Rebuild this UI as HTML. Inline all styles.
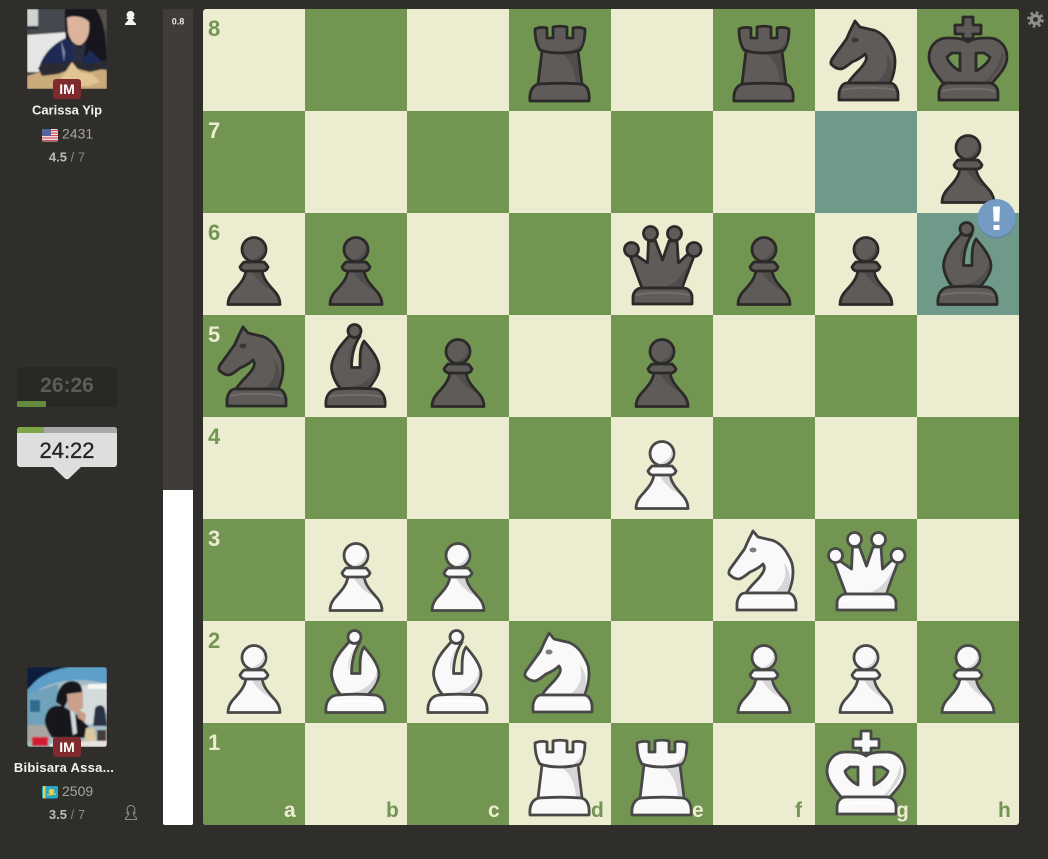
<!DOCTYPE html>
<html><head><meta charset="utf-8"><style>
html,body{margin:0;padding:0;background:#302e2b;width:1048px;height:859px;overflow:hidden}
svg{position:absolute;left:0;top:0;display:block}
.b{--f:#5e5b59;--s:#2b2a28;--d:#504e4c;--h:#716e6c}
.w{--f:#f9f9f9;--s:#484846;--d:#d6d6d8;--h:#ffffff}
.l{fill:#ebecd0}.k{fill:#739552}.hl{fill:#6f9988}
text{font-family:"Liberation Sans",sans-serif}
.co{font-size:22px;font-weight:700}
.fi{font-size:21px;font-weight:700}
.nm{font-size:13px;font-weight:700;fill:#f2f2f2;text-anchor:middle}
.im{font-size:14px;font-weight:700;fill:#fff;text-anchor:middle}
.rt{font-size:14px;fill:#a5a4a2}
.sc{font-size:13px;fill:#8b8a88;text-anchor:middle}
.sc tspan{font-weight:700;fill:#bdbcba}
.sk{stroke:var(--s);stroke-width:2.800;fill:var(--f)}
</style></head><body>
<svg width="1048" height="859" viewBox="0 0 1048 859" xmlns="http://www.w3.org/2000/svg">
<defs>
<g id="p" stroke-linejoin="round">
<path class="sk" d="M43 57C42 67 35 73 29 80C26 84 25 88 25 91.500H77C77 88 76 84 73 80C67 73 60 67 59 57Z"/>
<path d="M49 59H58C59 66 63 72 68 77C60 73 53 66 49 59Z" fill="var(--d)"/>
<path class="sk" d="M41 49H61C62 50 64 52 65 54C64 57 62 58 60 58H42C40 58 38 57 37 54C38 52 40 50 41 49Z"/>
<circle class="sk" cx="51" cy="36.500" r="12"/>
<path d="M60 32C62 39 56 45 47 47C54 48 62 44 62 36Z" fill="var(--d)"/>
</g>
<g id="r" stroke-linejoin="round">
<path class="sk" d="M33 42L29 75H73L69 42Z"/>
<path d="M52 44C62 50 66 62 67 74H71.500L67.500 44Z" fill="var(--d)"/>
<path class="sk" d="M26 20C30 18 34 18 38 19L38 29H44L44 18C48 17 54 17 58 18L58 29H64L64 19C68 18 72 18 76 20C76 28 75 35 71 41C60 45 42 45 31 41C27 35 26 28 26 20Z"/>
<path d="M62 42C67 40 72 35 74 29C74 34 73 37 70 40Z" fill="var(--d)"/>
<path class="sk" d="M21 92C20 82 24 76 30 75C44 74 60 74 72 75C78 76 81 82 80 92Z"/>
</g>
<g id="n" stroke-linejoin="round">
<path class="sk" d="M40 12L36 20C34 24 33 27 31.500 30L17 50C15.500 53 15.500 55 17 56C20 59 23 60 26 60C30 59 33 56 37 53C42 51 46 49 50 45C53 49 51 53 45 60C41 64 36 69 33 74H75C79 66 80 60 80 53C80 45 78 41 75 36C71 28 66 24 60 21.500L45 18Z"/>
<path d="M71 44C74 56 72 66 60 74H74C78 66 79 54 71 44Z" fill="var(--d)"/>
<ellipse cx="40" cy="31" rx="3.500" ry="2.500" fill="var(--s)" opacity=".7"/>
<path class="sk" d="M32 74C28 74 25 78 24 84V91H83V84C82 78 79 74 75 74Z"/>
<path d="M27 81C40 78 68 78 80 81" fill="none" stroke="var(--h)" stroke-width="2"/>
</g>
<g id="bi" stroke-linejoin="round">
<path class="sk" d="M44 21C38 28 33 33 30 40C27 46 26.500 50 26.500 53C27 60 31 69 36 74H63C68 68 74 60 74 53C74 44 66 34 59 26C55 32 55 40 55 52.500H46.500C46.500 40 49 30 55 21Z"/>
<path d="M44 50C44 40 47 32 51 25C45 33 41.500 43 44 50Z" fill="var(--d)"/>
<path d="M71.500 50C71 60 60 70 46 72H62C68 68 72.500 60 72.500 53C72.500 52 72 51 71.500 50Z" fill="var(--d)"/>
<circle class="sk" cx="49.500" cy="16" r="6.500"/>
<path class="sk" d="M21 91.500C20 82 24 75 32 74C44 73 58 73 70 74C77 75 81 82 80 91.500Z"/>
<path d="M24 82C36 79 66 79 77 82" fill="none" stroke="var(--h)" stroke-width="2"/>
</g>
<g id="q" stroke-linejoin="round">
<path class="sk" d="M31 75L19 43L25 42L36.500 50L37.500 28H44.500L51.500 47L58 28H66L67.500 50L77 41L83 43L71 75Z"/>
<path d="M79 47C74 60 66 70 54 74H70.500Z" fill="var(--d)"/>
<circle class="sk" cx="39.500" cy="20.500" r="7"/>
<circle class="sk" cx="63.500" cy="20.500" r="7"/>
<circle class="sk" cx="20.500" cy="36.500" r="7"/>
<circle class="sk" cx="83" cy="36.500" r="7"/>
<path class="sk" d="M22 91V84C22 79 26 75 31 75H72C77 75 81 79 81 84V91Z"/>
<path d="M25 82C38 79 66 79 78 82" fill="none" stroke="var(--h)" stroke-width="2"/>
</g>
<g id="ki" stroke-linejoin="round">
<path class="sk" d="M46 30V25H38V16H46V8H56V16H64V25H56V30Z"/>
<path class="sk" fill-rule="evenodd" d="M51 33C46 29 38 29 30 29C19 29 12 38 12 48C12 58 20 66 26 74H75C82 66 90 58 90 48C90 38 83 29 72 29C64 29 56 29 51 33ZM43 44H35L30 48C31 53 37 59 43 62ZM59 44H67L73 48C72 53 65 59 59 62Z"/>
<path d="M85 42C88 48 86 54 82 60L73 72H69C77 64 84 52 85 42Z" fill="var(--d)"/>
<path class="sk" d="M22 91V84C22 78 26 74 31 74H71C77 74 81 78 81 84V91Z"/>
<path d="M25 82C38 79 66 79 78 82" fill="none" stroke="var(--h)" stroke-width="2"/>
</g>
<clipPath id="bd"><rect x="203" y="9" width="816" height="816" rx="3"/></clipPath>
<clipPath id="a1"><rect x="27" y="9" width="80" height="80"/></clipPath>
<clipPath id="a2"><rect x="27" y="667" width="80" height="80" rx="3"/></clipPath>
<filter id="bl" x="-5%" y="-5%" width="110%" height="110%"><feGaussianBlur stdDeviation="0.8"/></filter>
</defs>

<!-- board -->
<g clip-path="url(#bd)">
<rect x="203" y="9" width="816" height="816" class="l"/>
<g class="k">
<rect x="305" y="9" width="102" height="102"/><rect x="509" y="9" width="102" height="102"/><rect x="713" y="9" width="102" height="102"/><rect x="917" y="9" width="102" height="102"/>
<rect x="203" y="111" width="102" height="102"/><rect x="407" y="111" width="102" height="102"/><rect x="611" y="111" width="102" height="102"/><rect x="815" y="111" width="102" height="102"/>
<rect x="305" y="213" width="102" height="102"/><rect x="509" y="213" width="102" height="102"/><rect x="713" y="213" width="102" height="102"/><rect x="917" y="213" width="102" height="102"/>
<rect x="203" y="315" width="102" height="102"/><rect x="407" y="315" width="102" height="102"/><rect x="611" y="315" width="102" height="102"/><rect x="815" y="315" width="102" height="102"/>
<rect x="305" y="417" width="102" height="102"/><rect x="509" y="417" width="102" height="102"/><rect x="713" y="417" width="102" height="102"/><rect x="917" y="417" width="102" height="102"/>
<rect x="203" y="519" width="102" height="102"/><rect x="407" y="519" width="102" height="102"/><rect x="611" y="519" width="102" height="102"/><rect x="815" y="519" width="102" height="102"/>
<rect x="305" y="621" width="102" height="102"/><rect x="509" y="621" width="102" height="102"/><rect x="713" y="621" width="102" height="102"/><rect x="917" y="621" width="102" height="102"/>
<rect x="203" y="723" width="102" height="102"/><rect x="407" y="723" width="102" height="102"/><rect x="611" y="723" width="102" height="102"/><rect x="815" y="723" width="102" height="102"/>
</g>
<rect x="815" y="111" width="102" height="102" class="hl"/>
<rect x="917" y="213" width="102" height="102" class="hl"/>
</g>

<!-- coordinates -->
<g class="co">
<text x="208" y="36" fill="#739552">8</text>
<text x="208" y="138" fill="#ebecd0">7</text>
<text x="208" y="240" fill="#739552">6</text>
<text x="208" y="342" fill="#ebecd0">5</text>
<text x="208" y="444" fill="#739552">4</text>
<text x="208" y="546" fill="#ebecd0">3</text>
<text x="208" y="648" fill="#739552">2</text>
<text x="208" y="750" fill="#ebecd0">1</text>
</g>
<g class="fi">
<text x="284" y="817" fill="#ebecd0">a</text>
<text x="386" y="817" fill="#739552">b</text>
<text x="488" y="817" fill="#ebecd0">c</text>
<text x="591" y="817" fill="#739552">d</text>
<text x="692" y="817" fill="#ebecd0">e</text>
<text x="795" y="817" fill="#739552">f</text>
<text x="896" y="817" fill="#ebecd0">g</text>
<text x="998" y="817" fill="#739552">h</text>
</g>

<!-- black pieces -->
<g class="b">
<use href="#r" x="509" y="9"/><use href="#r" x="713" y="9"/><use href="#n" x="815" y="9"/><use href="#ki" x="917" y="9"/>
<use href="#p" x="917" y="111"/>
<use href="#p" x="203" y="213"/><use href="#p" x="305" y="213"/><use href="#q" x="611" y="213"/><use href="#p" x="713" y="213"/><use href="#p" x="815" y="213"/><use href="#bi" x="917" y="213"/>
<use href="#n" x="203" y="315"/><use href="#bi" x="305" y="315"/><use href="#p" x="407" y="315"/><use href="#p" x="611" y="315"/>
</g>
<!-- white pieces -->
<g class="w">
<use href="#p" x="611" y="417"/>
<use href="#p" x="305" y="519"/><use href="#p" x="407" y="519"/><use href="#n" x="713" y="519"/><use href="#q" x="815" y="519"/>
<use href="#p" x="203" y="621"/><use href="#bi" x="305" y="621"/><use href="#bi" x="407" y="621"/><use href="#n" x="509" y="621"/><use href="#p" x="713" y="621"/><use href="#p" x="815" y="621"/><use href="#p" x="917" y="621"/>
<use href="#r" x="509" y="723"/><use href="#r" x="611" y="723"/><use href="#ki" x="815" y="723"/>
</g>

<!-- move badge -->
<circle cx="996.500" cy="219.500" r="19" fill="#5f83a6"/>
<circle cx="996.500" cy="218" r="19" fill="#749bc3"/>
<path d="M993 206.500H1000L999.300 221.500H993.700Z" fill="#fff"/>
<rect x="993.500" y="225" width="6" height="5" fill="#fff"/>

<!-- gear -->
<g transform="translate(1035.500 19.500)" fill="none" stroke="#8f8e8c">
<circle r="6.800" stroke-width="3" stroke-dasharray="2.670 2.670"/>
<circle r="4" stroke-width="3.200"/>
</g>

<!-- eval bar -->
<rect x="163" y="9" width="30" height="816" rx="2" fill="#403d39"/>
<path d="M163 490H193V823a2 2 0 0 1-2 2H165a2 2 0 0 1-2-2Z" fill="#fff"/>
<text x="178" y="24.500" font-size="9" font-weight="700" fill="#e8e8e8" text-anchor="middle">0.8</text>

<!-- avatar 1 -->
<g clip-path="url(#a1)"><g filter="url(#bl)">
<rect x="27" y="9" width="80" height="80" fill="#44494f"/>
<rect x="27" y="9" width="11" height="17" fill="#cfd3d2"/>
<rect x="27" y="26" width="11" height="3" fill="#2a2b2e"/>
<path d="M27 35L70 32V50L60 58L50 66L38 72H27Z" fill="#e6e6e6"/>
<path d="M90 9H107V30H90Z" fill="#57504a"/>
<path d="M65 9H96C102 18 107 30 107 66H64C68 50 64 25 65 9Z" fill="#17161a"/>
<path d="M39 68C42 56 52 44 66 38L76 46 84 58 90 50 100 60 107 62V70H39Z" fill="#1d2b55"/>
<path d="M67 18C72 15 84 16 89 22C90 32 88 40 81 45C74 46 70 40 68 32Z" fill="#dcb49c"/>
<path d="M72 44L80 48 86 42 83 62 74 62Z" fill="#2b2e3f"/>
<path d="M61 40L65 52 64 62 62 50Z" fill="#7d8aa5"/>
<path d="M27 89V76L40 72 60 68 72 62 86 68 107 70V89Z" fill="#cbab7c"/>
<path d="M38 68L44 62 60 64 72 60 90 64 107 60V68L90 72 74 68 58 74 42 76Z" fill="#2a2b30"/>
<path d="M60 80L72 62 80 72 92 74 100 82 88 86 70 86Z" fill="#e2c594"/>
</g></g>

<!-- avatar 2 -->
<g clip-path="url(#a2)"><g filter="url(#bl)">
<rect x="27" y="667" width="80" height="80" fill="#a5bcc6"/>
<path d="M27 667H107V684C85 678 60 678 38 690L27 698Z" fill="#5d9fc8"/>
<path d="M27 667H70C55 669 40 675 32 685L27 690Z" fill="#0c1c3c"/>
<path d="M27 694L58 684V730H27Z" fill="#6fa2bc"/>
<path d="M76 686L107 683V712L95 724H80Z" fill="#d3dcdb"/>
<path d="M88 684H107V689H88Z" fill="#f4f6f5"/>
<path d="M30 700H40V712H30Z" fill="#2e6a8b"/>
<path d="M95 708C98 704 104 704 105 710L107 726H93Z" fill="#2a3042"/>
<path d="M27 725H50V742H27Z" fill="#a8a6a2"/>
<path d="M56 702C57 688 64 681 72 681C79 681 83 686 82 693L70 696 64 708Z" fill="#17181f"/>
<path d="M67 694L83 692 83 708 75 713 68 708Z" fill="#caa08b"/>
<path d="M45 718C48 706 56 703 66 708L76 714 88 726 94 738H52C47 730 44 724 45 718Z" fill="#14141a"/>
<path d="M70 710L75 713 77 733 73 735Z" fill="#cfd9de"/>
<path d="M77 709L86 714 85 722 78 718Z" fill="#c99c86"/>
<rect x="32" y="737" width="16" height="9" fill="#d31e33"/>
<path d="M50 744L107 740V747H50Z" fill="#e9e3dc"/>
<path d="M86 728H94L96 741H84Z" fill="#dcc79e"/>
<path d="M97 730H106V741H97Z" fill="#463a36"/>
</g></g>

<!-- IM badges -->
<rect x="53" y="79" width="28" height="20" rx="3" fill="#7f2a2c"/>
<text x="67" y="94" class="im">IM</text>
<rect x="53" y="737" width="28" height="20" rx="3" fill="#7f2a2c"/>
<text x="67" y="752" class="im">IM</text>

<!-- player 1 -->
<text x="67" y="114.500" class="nm">Carissa Yip</text>
<g>
<rect x="42" y="129" width="16" height="12.500" rx="1.500" fill="#f1f1f1"/>
<path d="M42 130.500H58M42 133H58M42 135.500H58M42 138H58M42 140.500H58" stroke="#d8495a" stroke-width="1.200"/>
<rect x="42" y="129" width="9" height="7" fill="#55659c"/>
</g>
<text x="62" y="138.500" class="rt">2431</text>
<text x="67" y="161.500" class="sc"><tspan>4.5</tspan> / 7</text>
<path d="M130.500 11a3.800 3.800 0 0 1 2.700 6.500h1.200v1.500h-1.700c.2 2 1.500 3 3.300 4.500V25h-11v-1.500c1.800-1.500 3.100-2.500 3.300-4.500h-1.700v-1.500h1.200a3.800 3.800 0 0 1 2.700-6.500z" fill="#f4f4f4"/>

<!-- clocks -->
<rect x="17" y="367" width="100" height="40" rx="3" fill="#2a2825"/>
<rect x="17" y="401" width="29" height="6" rx="1" fill="#678a41"/>
<text x="67" y="392" font-size="21" font-weight="700" fill="#5c5b59" text-anchor="middle">26:26</text>
<path d="M52 466H82L69 478.500Q67 480 65 478.500Z" fill="#dedede"/>
<rect x="17" y="427" width="100" height="40" rx="3" fill="#dedede"/>
<path d="M17 433V430a3 3 0 0 1 3-3H114a3 3 0 0 1 3 3V433Z" fill="#a9a9a9"/>
<path d="M17 433V430a3 3 0 0 1 3-3H44V433Z" fill="#7ea649"/>
<text x="67" y="458" font-size="22" fill="#242321" stroke="#242321" stroke-width=".3" text-anchor="middle">24:22</text>

<!-- player 2 -->
<text x="64" y="772" class="nm" style="letter-spacing:.25px">Bibisara Assa...</text>
<g>
<rect x="42" y="786" width="16" height="12.500" rx="1.500" fill="#2aa7c4"/>
<rect x="43" y="786" width="2.500" height="12.500" fill="#e3cf4f"/>
<circle cx="51.500" cy="791.500" r="2.800" fill="#e3cf4f"/>
<path d="M47 795L56 794" stroke="#e3cf4f" stroke-width="1.200"/>
</g>
<text x="62" y="796" class="rt">2509</text>
<text x="67" y="819" class="sc"><tspan>3.5</tspan> / 7</text>
<path d="M131 805.500a3.800 3.800 0 0 1 2.700 6.500h1.200v1.500h-1.700c.2 2 1.500 3 3.300 4.500v1.500h-11v-1.500c1.800-1.500 3.100-2.500 3.300-4.500h-1.700V812h1.200a3.800 3.800 0 0 1 2.700-6.500z" fill="none" stroke="#8d8c8a" stroke-width="1"/>
</svg>
</body></html>
